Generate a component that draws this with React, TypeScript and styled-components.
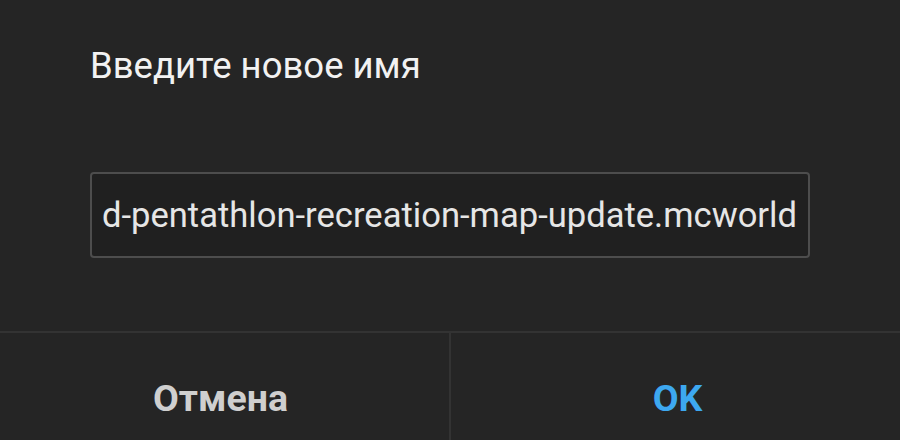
import React from 'react';
import styled, { createGlobalStyle } from 'styled-components';

const GlobalStyle = createGlobalStyle`
  html, body {
    margin: 0;
    padding: 0;
    background: #252525;
  }
  body {
    font-family: Roboto, 'Noto Sans', sans-serif;
  }
`;

const StyledDialog = styled.div`
  width: 900px;
  height: 440px;
  background: #252525;
  display: flex;
  flex-direction: column;
  overflow: hidden;
`;

const StyledBody = styled.div`
  flex: 1;
  padding: 44px 90px 0 90px;
  display: flex;
  flex-direction: column;
`;

const StyledTitle = styled.h2`
  margin: 0;
  font-size: 36.5px;
  line-height: 44px;
  font-weight: 400;
  color: #f2f2f2;
`;

const StyledField = styled.div`
  margin-top: 84px;
  height: 86px;
  width: 720px;
  box-sizing: border-box;
  border: 2px solid #4d4d4d;
  border-radius: 4px;
  background: #202020;
  display: flex;
  align-items: center;
  justify-content: flex-end;
  padding: 0 11px;
  overflow: hidden;
  white-space: nowrap;
`;

const StyledValue = styled.span`
  font-size: 34.6px;
  color: #e6e6e6;
`;

const StyledActions = styled.div`
  height: 107px;
  border-top: 2px solid #333;
  display: grid;
  grid-template-columns: 449px 1fr;
`;

const StyledAction = styled.button<{ primary?: boolean }>`
  background: none;
  border: none;
  border-left: ${(p) => (p.primary ? '2px solid #333' : 'none')};
  font-family: Roboto, 'Noto Sans', sans-serif;
  font-size: 37.5px;
  font-weight: 700;
  color: ${(p) => (p.primary ? '#3da8f0' : '#cfcfcf')};
  padding: ${(p) => (p.primary ? '22px 0 0 4px' : '22px 8px 0 0')};
  cursor: pointer;
`;

export default function App() {
  return (
    <React.Fragment>
      <GlobalStyle />
      <StyledDialog>
        <StyledBody>
          <StyledTitle>Введите новое имя</StyledTitle>
          <StyledField>
            <StyledValue>d-pentathlon-recreation-map-update.mcworld</StyledValue>
          </StyledField>
        </StyledBody>
        <StyledActions>
          <StyledAction>Отмена</StyledAction>
          <StyledAction primary>OK</StyledAction>
        </StyledActions>
      </StyledDialog>
    </React.Fragment>
  );
}
